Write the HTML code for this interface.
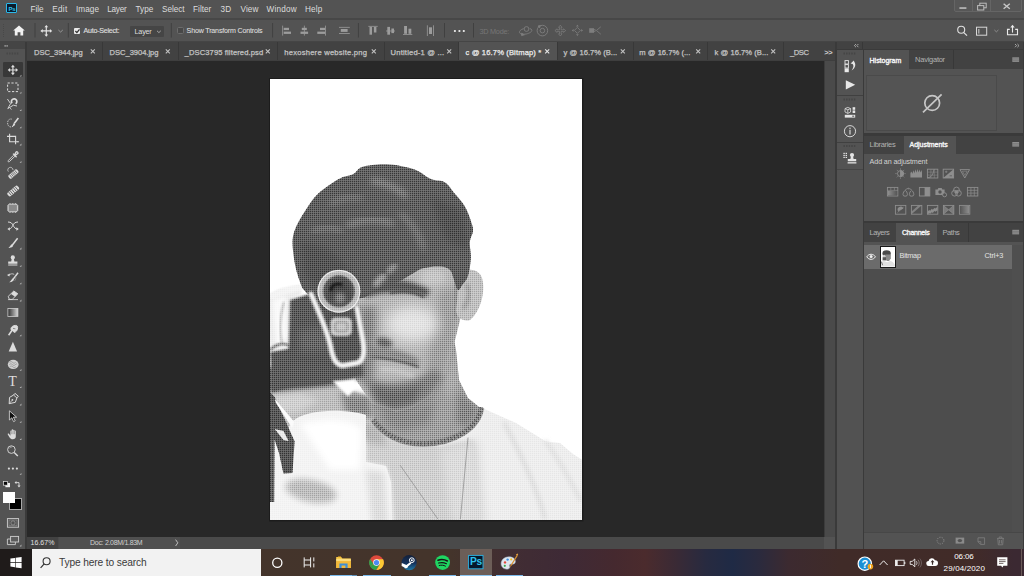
<!DOCTYPE html>
<html lang="en">
<head>
<meta charset="utf-8">
<title>c @ 16.7% (Bitmap)</title>
<style>
html,body{margin:0;padding:0;}
body{width:1024px;height:576px;overflow:hidden;background:#282828;position:relative;font-family:"Liberation Sans",sans-serif;color:#d8d8d8;}
.a{position:absolute;}
.t{position:absolute;white-space:nowrap;line-height:1;font-size:8px;color:#d6d6d6;}
svg{position:absolute;overflow:visible;}
.r{position:absolute;}
</style>
</head>
<body>
<!-- application frame -->
<div class="r" style="left:0;top:0;width:1024px;height:18px;background:#535353"></div>
<div class="r" style="left:0;top:17.700px;width:1024px;height:2.200px;background:#474747"></div>
<div class="r" style="left:0;top:19.900px;width:1024px;height:20.800px;background:#535353"></div>
<div class="r" style="left:0;top:40.700px;width:1024px;height:1.900px;background:#454545"></div>
<!-- document tab bar -->
<div class="r" style="left:26px;top:42px;width:810px;height:18px;background:#424242"></div>
<div class="r" style="left:458px;top:42px;width:99px;height:18px;background:#535353"></div>
<div class="r" style="left:102.0px;top:42px;width:1px;height:18px;background:#383838"></div><div class="r" style="left:177.5px;top:42px;width:1px;height:18px;background:#383838"></div><div class="r" style="left:277.0px;top:42px;width:1px;height:18px;background:#383838"></div><div class="r" style="left:383.5px;top:42px;width:1px;height:18px;background:#383838"></div><div class="r" style="left:458.0px;top:42px;width:1px;height:18px;background:#383838"></div><div class="r" style="left:556.8px;top:42px;width:1px;height:18px;background:#383838"></div><div class="r" style="left:632.5px;top:42px;width:1px;height:18px;background:#383838"></div><div class="r" style="left:706.8px;top:42px;width:1px;height:18px;background:#383838"></div><div class="r" style="left:783.0px;top:42px;width:1px;height:18px;background:#383838"></div><svg style="left:0;top:0" width="1024" height="70"><path d="M90.8 49.3L94.8 53.3M94.8 49.3L90.8 53.3" stroke="#c4c4c4" stroke-width="1.050" fill="none"/><path d="M165.8 49.3L169.8 53.3M169.8 49.3L165.8 53.3" stroke="#c4c4c4" stroke-width="1.050" fill="none"/><path d="M265.8 49.3L269.8 53.3M269.8 49.3L265.8 53.3" stroke="#c4c4c4" stroke-width="1.050" fill="none"/><path d="M371.8 49.3L375.8 53.3M375.8 49.3L371.8 53.3" stroke="#c4c4c4" stroke-width="1.050" fill="none"/><path d="M447.2 49.3L451.2 53.3M451.2 49.3L447.2 53.3" stroke="#c4c4c4" stroke-width="1.050" fill="none"/><path d="M545.2 49.3L549.2 53.3M549.2 49.3L545.2 53.3" stroke="#e8e8e8" stroke-width="1.050" fill="none"/><path d="M620.8 49.3L624.8 53.3M624.8 49.3L620.8 53.3" stroke="#c4c4c4" stroke-width="1.050" fill="none"/><path d="M696.2 49.3L700.2 53.3M700.2 49.3L696.2 53.3" stroke="#c4c4c4" stroke-width="1.050" fill="none"/><path d="M771.2 49.3L775.2 53.3M775.2 49.3L771.2 53.3" stroke="#c4c4c4" stroke-width="1.050" fill="none"/></svg>
<!-- canvas -->
<div class="r" style="left:27px;top:60px;width:808px;height:1px;background:#3e3e3e"></div>
<div class="r" style="left:27px;top:61px;width:797px;height:476px;background:#282828"></div>
<div class="r" style="left:824px;top:61px;width:11px;height:476px;background:#4a4a4a"></div>
<div class="r" style="left:824px;top:61px;width:1px;height:476px;background:#3c3c3c"></div>
<!-- status bar -->
<div class="r" style="left:27px;top:537px;width:808px;height:12px;background:#4a4a4a"></div>
<div class="r" style="left:27px;top:537px;width:31px;height:12px;background:#424242"></div>
<div class="r" style="left:59px;top:537px;width:121px;height:12px;background:#4f4f4f"></div>
<div class="r" style="left:824px;top:537px;width:11px;height:12px;background:#535353"></div>
<!-- tools panel -->
<div class="r" style="left:0;top:42px;width:25px;height:507px;background:#535353"></div>
<div class="r" style="left:25px;top:42px;width:2px;height:507px;background:#3a3a3a"></div>
<div class="r" style="left:0;top:42px;width:25px;height:7px;background:#454545"></div>
<div class="r" style="left:3px;top:62px;width:20px;height:15px;background:#383838;border-radius:1px"></div>
<!-- right dock -->
<div class="r" style="left:835px;top:42px;width:189px;height:507px;background:#3a3a3a"></div>
<div class="r" style="left:837px;top:42px;width:186px;height:7px;background:#424242"></div>
<div class="r" style="left:862px;top:42px;width:1px;height:7px;background:#383838"></div>
<svg style="left:0;top:0" width="1024" height="576" viewBox="0 0 1024 576">
<defs>
 <clipPath id="docclip"><rect x="270" y="79" width="312" height="441"/></clipPath>
 <filter id="b0" x="-20%" y="-20%" width="140%" height="140%"><feGaussianBlur stdDeviation="0.500"/></filter>
 <filter id="b1" x="-20%" y="-20%" width="140%" height="140%"><feGaussianBlur stdDeviation="0.900"/></filter>
 <filter id="b2" x="-30%" y="-30%" width="160%" height="160%"><feGaussianBlur stdDeviation="2"/></filter>
 <filter id="b3" x="-40%" y="-40%" width="180%" height="180%"><feGaussianBlur stdDeviation="3"/></filter>
 <filter id="b4" x="-40%" y="-40%" width="180%" height="180%"><feGaussianBlur stdDeviation="4.500"/></filter>
 <filter id="b7" x="-50%" y="-50%" width="200%" height="200%"><feGaussianBlur stdDeviation="7"/></filter>
 <pattern id="ht" x="270" y="79" width="2" height="2" patternUnits="userSpaceOnUse"><rect width="2" height="2" fill="#b8b8b8"/><rect x="0" y="0" width="1.300" height="1.300" fill="#303030"/></pattern>
 <clipPath id="hairclip"><path d="M292.6 240.0C292.2 245.1 293.2 252.5 293.9 257.8C294.6 263.1 295.5 267.3 296.7 271.7C297.9 276.1 299.6 281.1 300.8 284.2C302.0 287.2 302.1 287.9 304.0 290.0C305.9 292.1 307.7 295.2 312.0 297.0C316.3 298.8 321.7 300.8 330.0 301.0C338.3 301.2 355.0 299.5 362.0 298.0C369.0 296.5 368.3 294.0 372.0 292.0C375.7 290.0 379.7 287.7 384.0 286.0C388.3 284.3 393.3 284.0 398.0 282.0C402.7 280.0 407.7 276.3 412.0 274.0C416.3 271.7 419.3 269.2 424.0 268.0C428.7 266.8 435.7 266.2 440.0 266.5C444.3 266.8 447.7 267.8 450.0 270.0C452.3 272.2 452.7 276.7 454.0 280.0C455.3 283.3 456.5 289.3 458.0 290.0C459.5 290.7 461.3 286.3 463.0 284.0C464.7 281.7 466.7 280.3 468.0 276.0C469.3 271.7 470.5 264.0 470.8 258.3C471.1 252.6 469.4 246.2 469.8 241.7C470.2 237.1 472.8 234.5 473.0 231.0C473.2 227.5 472.2 225.0 470.8 220.8C469.4 216.6 467.4 210.7 464.6 206.0C461.8 201.3 457.3 196.6 454.0 192.7C450.7 188.8 448.6 184.6 444.8 182.3C441.0 180.0 436.2 181.2 431.0 179.0C425.8 176.8 421.2 171.7 413.8 169.2C406.4 166.7 395.2 164.6 386.7 164.2C378.2 163.8 368.3 165.1 362.7 166.7C357.1 168.3 357.3 171.9 353.3 174.0C349.3 176.1 344.7 175.7 338.8 179.0C332.9 182.3 323.6 188.6 318.0 193.8C312.4 199.0 309.1 204.9 305.4 210.4C301.7 215.9 298.1 222.1 296.0 227.0C293.9 231.9 293.0 234.9 292.6 240.0Z"/></clipPath>
 <clipPath id="headclip"><path d="M330 250L470 250L470 272L460 320L455 340L446 372L432 396L412 408L396 412L372 404L356 380L350 340Z"/><path d="M460 276C466 267 478 268 482 278C486 292 480 312 470 320C464 322 456 318 456 310Z"/><path d="M368 400L454 340L456 350L459 380L468 398L481.600 409C476 430 450 444 420 444C396 444 378 432 370 416Z"/><path d="M268 380L372 398L376 424L268 444Z"/></clipPath>
 <clipPath id="sleeveclip"><path d="M293 421C300 414 320 410 341 411C352 411.500 360 413 366 415L366 462L386 466L391 482L392 524L266 524L266 446L280 440Z"/></clipPath>
</defs>
<rect x="269" y="78" width="314.500" height="443.500" fill="#1c1c1c"/>
<g clip-path="url(#docclip)">
 <rect x="270" y="79" width="312" height="441" fill="#ffffff"/>
 <!-- shirt -->
 <path filter="url(#b0)" d="M372 420L480 407L516 423L546 441.500L560 443L573 454L584 461L584 524L266 524L266 470L296 414Z" fill="#eeeeee"/>
 <path filter="url(#b2)" d="M366 416L380 432L440 446L474 440L480 524L394 524L391 482L386 466L366 462Z" fill="#d0d0d0"/>
 <path filter="url(#b4)" d="M440 450L478 440L486 524L452 524Z" fill="#dcdcdc"/>
 <path filter="url(#b3)" d="M356 418L382 424L386 446L366 442Z" fill="#b8b8b8"/>
 <path filter="url(#b2)" d="M504 422.500C524 460 538 492 545 519" stroke="#d8d8d8" stroke-width="3" fill="none"/>
 <path filter="url(#b2)" d="M545 440.600C560 460 572 484 581 501" stroke="#dcdcdc" stroke-width="3" fill="none"/>
 <!-- neck -->
 <path filter="url(#b0)" d="M368 400L454 340L456 350L459 380L468 398L481.600 409C476 430 450 444 420 444C396 444 378 432 370 416Z" fill="#a0a0a0"/>
 <g clip-path="url(#headclip)">
 <path filter="url(#b3)" d="M458 392L470 401L478 410L468 428L456 422Z" fill="#888888"/>
 <path filter="url(#b4)" d="M380 408L420 408L436 398L430 424L402 432L384 424Z" fill="#8c8c8c"/>
 <path filter="url(#b3)" d="M440 372L456 352L458 384L448 400Z" fill="#acacac"/>
 </g>
 <!-- collar -->
 <path filter="url(#b0)" d="M481 407.500C478 428 454 443 424 443.500C400 444 382 433 373 419" fill="none" stroke="#929292" stroke-width="6.500"/>
 <path filter="url(#b0)" d="M481 407.500C478 428 454 443 424 443.500C400 444 382 433 373 419" fill="none" stroke="#6a6a6a" stroke-width="4" stroke-dasharray="1.600 1.800"/>
 <!-- hand / wrist -->
 <path filter="url(#b1)" d="M266 382L300 380L340 386L372 398L374 420L336 424L300 426L280 440L266 440Z" fill="#bebebe"/>
 <path filter="url(#b3)" d="M340 392L370 396L374 418L346 414Z" fill="#8c8c8c"/>
 <path filter="url(#b3)" d="M272 396L300 392L320 400L300 412L272 414Z" fill="#d0d0d0"/>
 <!-- sleeve -->
 <path filter="url(#b0)" d="M293 421C300 414 320 410 341 411C352 411.500 360 413 366 415L366 462L386 466L391 482L392 524L266 524L266 446L280 440Z" fill="#f4f4f4"/>
 <g clip-path="url(#sleeveclip)">
 <path filter="url(#b3)" d="M300 424C330 416 356 420 362 430L360 470L330 470Z" fill="#ffffff"/>
 <ellipse filter="url(#b3)" cx="311" cy="491" rx="26" ry="11" fill="#bebebe" transform="rotate(12 311 491)"/>
 <path filter="url(#b3)" d="M366 470L384 472L388 524L372 524Z" fill="#dedede"/>
 </g>
 <!-- fingers -->
 <path filter="url(#b1)" d="M266 296L280 289L300 285L302 294L290 300L289 346L270 352Z" fill="#ececec"/>
 <path filter="url(#b2)" d="M272 300L286 296L287 338L276 346Z" fill="#fafafa"/>
 <path filter="url(#b1)" d="M284 302C280 316 279 330 282 344" stroke="#a8a8a8" stroke-width="1.500" fill="none"/>
 <path filter="url(#b1)" d="M270 350C276 344 284 342 290 346" stroke="#6a6a6a" stroke-width="2" fill="none"/>
 <path filter="url(#b1)" d="M270 297C282 292 294 288 303 287.500" stroke="#f4f4f4" stroke-width="6" fill="none"/>
 <!-- strap -->
 <path filter="url(#b0)" d="M268 390L274.700 397L294.600 441.300L292.500 473L283.400 473.500L279 453L274.700 440L268 440Z" fill="#585858"/>
 <path filter="url(#b0)" d="M274.700 398.800L294 421.500L292.200 428L276 403Z" fill="#fbfbfb"/>
 <path filter="url(#b0)" d="M274.700 429L283.500 431L288.500 441L283.500 440Z" fill="#ececec"/>
 <path filter="url(#b0)" d="M268 440L274.600 440L274.200 502L268 502Z" fill="#5e5e5e"/>
 <path filter="url(#b1)" d="M270 352L292 348L300 384L272 392Z" fill="#5c5c5c"/>
 <!-- face -->
 <path filter="url(#b0)" d="M330 250L470 250L470 272L460 320L455 340L446 372L432 396L412 408L396 412L372 404L356 380L350 340Z" fill="#b6b6b6"/>
 <g clip-path="url(#headclip)">
 <path filter="url(#b4)" d="M440 290L460 286L456 340L446 372L432 396L426 370Z" fill="#a0a0a0"/>
 <ellipse filter="url(#b7)" cx="412" cy="324" rx="27" ry="18" fill="#e4e4e4"/>
 <ellipse filter="url(#b3)" cx="433" cy="277" rx="13" ry="8" fill="#c8c8c8"/>
 <ellipse filter="url(#b3)" cx="396" cy="286" rx="18" ry="6" fill="#8c8c8c"/>
 <path filter="url(#b2)" d="M455 274L456 318" stroke="#929292" stroke-width="6" fill="none"/>
 </g>
 <!-- ear -->
 <path filter="url(#b0)" d="M460 276C466 267 478 268 482 278C486 292 480 312 470 320C464 322 456 318 456 310Z" fill="#c0c0c0"/>
 <path filter="url(#b2)" d="M466 284C471 290 470 300 463 309" stroke="#8e8e8e" stroke-width="3" fill="none"/>
 <g clip-path="url(#headclip)">
 <!-- beard & mouth -->
 <path filter="url(#b3)" d="M362 376C380 386 410 386 434 370L444 376L430 398L412 408L396 412L374 404Z" fill="#828282"/>
 <path filter="url(#b3)" d="M372 384C386 392 404 392 422 384L414 402L392 407L378 400Z" fill="#6e6e6e"/>
 <path filter="url(#b2)" d="M364 350C378 344 402 349 420 360L417 366C400 359 382 357 368 360Z" fill="#8c8c8c"/>
 <path filter="url(#b1)" d="M366 357C382 357 402 361 419 367" stroke="#585858" stroke-width="2" fill="none"/>
 <path filter="url(#b2)" d="M380 369C392 369 404 372 414 376" stroke="#cacaca" stroke-width="4" fill="none"/>
 <!-- nose shadow -->
 <path filter="url(#b2)" d="M376 339C382 335 392 339 393 345C388 349 380 348 376 344Z" fill="#6c6c6c"/>
 <path filter="url(#b4)" d="M360 306L376 306L373 384L358 380Z" fill="#868686"/>
 <!-- eye / brow -->
 <path filter="url(#b1)" d="M390 293C400 290 414 291 424 297" stroke="#565656" stroke-width="2.600" fill="none"/>
 <path filter="url(#b2)" d="M362 286C380 277 410 279 430 290L427 297C410 290 386 290 366 298Z" fill="#5c5c5c"/>
 </g>
 <!-- hair -->
 <path filter="url(#b0)" d="M292.6 240.0C292.2 245.1 293.2 252.5 293.9 257.8C294.6 263.1 295.5 267.3 296.7 271.7C297.9 276.1 299.6 281.1 300.8 284.2C302.0 287.2 302.1 287.9 304.0 290.0C305.9 292.1 307.7 295.2 312.0 297.0C316.3 298.8 321.7 300.8 330.0 301.0C338.3 301.2 355.0 299.5 362.0 298.0C369.0 296.5 368.3 294.0 372.0 292.0C375.7 290.0 379.7 287.7 384.0 286.0C388.3 284.3 393.3 284.0 398.0 282.0C402.7 280.0 407.7 276.3 412.0 274.0C416.3 271.7 419.3 269.2 424.0 268.0C428.7 266.8 435.7 266.2 440.0 266.5C444.3 266.8 447.7 267.8 450.0 270.0C452.3 272.2 452.7 276.7 454.0 280.0C455.3 283.3 456.5 289.3 458.0 290.0C459.5 290.7 461.3 286.3 463.0 284.0C464.7 281.7 466.7 280.3 468.0 276.0C469.3 271.7 470.5 264.0 470.8 258.3C471.1 252.6 469.4 246.2 469.8 241.7C470.2 237.1 472.8 234.5 473.0 231.0C473.2 227.5 472.2 225.0 470.8 220.8C469.4 216.6 467.4 210.7 464.6 206.0C461.8 201.3 457.3 196.6 454.0 192.7C450.7 188.8 448.6 184.6 444.8 182.3C441.0 180.0 436.2 181.2 431.0 179.0C425.8 176.8 421.2 171.7 413.8 169.2C406.4 166.7 395.2 164.6 386.7 164.2C378.2 163.8 368.3 165.1 362.7 166.7C357.1 168.3 357.3 171.9 353.3 174.0C349.3 176.1 344.7 175.7 338.8 179.0C332.9 182.3 323.6 188.6 318.0 193.8C312.4 199.0 309.1 204.9 305.4 210.4C301.7 215.9 298.1 222.1 296.0 227.0C293.9 231.9 293.0 234.9 292.6 240.0Z" fill="#5e5e5e"/>
 <g clip-path="url(#hairclip)">
 <path filter="url(#b3)" d="M371 181C384 182 398 188 407 197" stroke="#8c8c8c" stroke-width="5" fill="none"/>
 <path filter="url(#b3)" d="M347 226C362 218 380 218 394 224" stroke="#868686" stroke-width="5" fill="none"/>
 <path filter="url(#b3)" d="M312 232C322 226 334 226 342 232" stroke="#808080" stroke-width="4" fill="none"/>
 <path filter="url(#b3)" d="M400 214C412 222 420 236 424 250" stroke="#828282" stroke-width="4" fill="none"/>
 <path filter="url(#b3)" d="M330 204C340 198 352 196 362 198" stroke="#7e7e7e" stroke-width="4" fill="none"/>
 <path filter="url(#b4)" d="M430 196L462 210L470 250L446 240Z" fill="#525252"/>
 <path filter="url(#b4)" d="M300 240L330 250L350 270L320 290L304 276Z" fill="#545454"/>
 <path filter="url(#b2)" d="M388 273C391 268 394 266 397 266" stroke="#9a9a9a" stroke-width="5" fill="none"/>
 <path filter="url(#b2)" d="M375 286C378 280 382 277 386 276" stroke="#a4a4a4" stroke-width="6" fill="none"/>
 </g>
 <!-- camera dark body -->
 <path filter="url(#b1)" d="M290 300L316 292L336 312L340 382L300 385L288 372Z" fill="#5a5a5a"/>
 <path filter="url(#b3)" d="M298 330L326 326L330 350L300 352Z" fill="#666666"/>
 <path filter="url(#b2)" d="M268 368L300 362L340 366L362 362L364 376L340 385L300 389L268 392Z" fill="#5c5c5c"/>
 <!-- camera silver -->
 <path filter="url(#b1)" d="M318 300L336 312L360 306L364 360L340 367L330 345Z" fill="#585858"/>
 <path filter="url(#b1)" d="M311 294C318 310 327 330 330.500 346C332.500 357 335 365 343 365.500L357 363C364 361 364.500 352 363 342L357 308" stroke="#f2f2f2" stroke-width="5" fill="none" stroke-linecap="round"/>
 <rect filter="url(#b1)" x="330.500" y="317.500" width="21.500" height="18.500" rx="5" fill="#cccccc"/>
 <rect filter="url(#b1)" x="334" y="321" width="14.500" height="11.500" rx="3.500" fill="#a4a4a4"/>
 <rect filter="url(#b1)" x="336" y="323" width="10.500" height="7.500" rx="2.500" fill="#c4c4c4"/>
 <!-- white gap -->
 <path filter="url(#b1)" d="M332.500 381L355 379.500L356 388L348 396.500Z" fill="#ffffff"/>
 <!-- lens -->
 <circle filter="url(#b0)" cx="338.900" cy="291.200" r="21.500" fill="#ececec"/>
 <circle filter="url(#b0)" cx="338.900" cy="291.200" r="20.300" fill="#c0c0c0"/>
 <circle filter="url(#b0)" cx="338.900" cy="291.200" r="17.300" fill="#dadada"/>
 <circle filter="url(#b1)" cx="338.900" cy="291.200" r="16.200" fill="#5a5a5a"/>
 <circle filter="url(#b2)" cx="338.900" cy="291.200" r="11" fill="#4c4c4c"/>
 <path filter="url(#b1)" d="M331 291C331 285 336 283 342 284.500" stroke="#1a1a1a" stroke-width="3.200" fill="none"/>
 <circle filter="url(#b2)" cx="340" cy="298" r="5.500" fill="#848484"/>
 <rect x="270" y="79" width="312" height="441" fill="url(#ht)" style="mix-blend-mode:overlay" opacity="0.700"/>
 <!-- necklace -->
 <path d="M468 437.600L460.400 519M400 465L437.800 519" stroke="#9a9a9a" stroke-width="0.900" fill="none"/>
</g>
</svg>

<!-- ps logo -->
<div class="r" style="left:6.4px;top:3px;width:10.8px;height:10.400px;background:#0b1c2c;border:0.9px solid #2ab8ea;box-sizing:border-box;border-radius:1px"></div>
<!-- layer dropdown -->
<div class="r" style="left:130px;top:25.900px;width:34px;height:11px;background:#454545;border-radius:1px"></div>
<!-- auto-select checkbox -->
<div class="r" style="left:74px;top:27.8px;width:6.4px;height:6.4px;background:#eaeaea;border-radius:1px"></div>
<div class="r" style="left:177.200px;top:27.200px;width:6.800px;height:6.800px;border:0.9px solid #6c6c6c;box-sizing:border-box;border-radius:1.600px;background:#484848"></div>
<!-- window control box -->
<div class="r" style="left:954px;top:-2px;width:67.5px;height:14.200px;background:#575757;border:0.8px solid #656565;box-sizing:border-box;border-radius:2px"></div>
<div class="r" style="left:972.3px;top:0;width:0.8px;height:12px;background:#656565"></div>
<div class="r" style="left:990.2px;top:0;width:0.8px;height:12px;background:#656565"></div>
<svg style="left:0;top:0" width="1024" height="44" viewBox="0 0 1024 44">
 <!-- grip -->
 <path d="M3.500 24v13" stroke="#484848" stroke-width="1" stroke-dasharray="1 1"/>
 <!-- separators -->
 <g stroke="#404040" stroke-width="1"><path d="M35 23v14.500M68.300 23v14.500M171.300 23v14.500M272.600 23v14.500M358.400 23v14.500M444.500 23v14.500M473.500 23v14.500"/></g>
 <!-- home -->
 <path d="M19 25.400l5.800 5.200h-1.600v5h-2.800v-3.400h-2.800v3.400h-2.800v-5h-1.600z" fill="#f2f2f2"/>
 <!-- move icon -->
 <path d="M46.300 25l1.900 2.300h-1.300v3h3v-1.300l2.300 1.900-2.300 1.900v-1.300h-3v3h1.300l-1.900 2.300-1.900-2.300h1.300v-3h-3v1.300l-2.300-1.900 2.300-1.900v1.300h3v-3h-1.300z" fill="#e4e4e4"/>
 <path d="M58.400 30l2.200 2 2.200-2" fill="none" stroke="#a8a8a8" stroke-width="0.800"/>
 <path d="M75.400 31l1.500 1.600 2.600-3.200" fill="none" stroke="#303030" stroke-width="1.300"/>
 <path d="M157 30.800l1.900 1.800 1.900-1.800" fill="none" stroke="#bcbcbc" stroke-width="0.800"/>
 <!-- align icons -->
 <g fill="#9c9c9c">
  <rect x="282.300" y="25.600" width="0.800" height="10"/><rect x="283.700" y="27.800" width="5.300" height="2.300"/><rect x="283.700" y="31.600" width="7.300" height="2.300"/>
  <rect x="303.900" y="25.600" width="0.800" height="10"/><rect x="301.800" y="27.800" width="5" height="2.300"/><rect x="300.500" y="31.600" width="7.600" height="2.300"/>
  <rect x="325.200" y="25.600" width="0.800" height="10"/><rect x="320" y="27.800" width="5" height="2.300"/><rect x="317.300" y="31.600" width="7.700" height="2.300"/>
  <rect x="339" y="26.900" width="10.800" height="0.800"/><rect x="339" y="33.200" width="10.800" height="0.800"/><rect x="340.800" y="29" width="6.800" height="2.900"/>
  <rect x="368.300" y="25.900" width="9.400" height="0.800"/><rect x="369.500" y="26.900" width="2.500" height="7.800"/><rect x="373.900" y="26.900" width="2.500" height="5.600"/>
  <rect x="386" y="30.600" width="9" height="0.800"/><rect x="387.300" y="26.900" width="2.700" height="7.800"/><rect x="391.400" y="28.500" width="2.600" height="4.600"/>
  <rect x="403" y="34" width="9.300" height="0.800"/><rect x="404.100" y="26" width="2.900" height="7.800"/><rect x="408.500" y="28.700" width="2.800" height="5.100"/>
  <rect x="426.900" y="25.300" width="0.800" height="10.700"/><rect x="433.100" y="25.300" width="0.800" height="10.700"/><rect x="429" y="27.300" width="3" height="6.700"/>
 </g>
 <g fill="#f0f0f0"><circle cx="454.900" cy="31" r="1.100"/><circle cx="459.400" cy="31" r="1.100"/><circle cx="463.800" cy="31" r="1.100"/></g>
 <!-- 3d mode icons -->
 <g fill="none" stroke="#7e7e7e" stroke-width="0.900">
  <circle cx="526.500" cy="29" r="2.400"/><path d="M523.600 28.600c-3 1-4.600 2.800-4 4.200 0.600 1.400 3.400 1.800 6.600 1.200 3.600-0.800 6-2.400 5.600-4-0.200-0.800-1-1.200-2-1.400"/><path d="M521.600 33.200l2.800 1.600-2.800 0.800z" fill="#7e7e7e"/>
  <circle cx="542.400" cy="30.600" r="5.300"/><circle cx="542.400" cy="30.600" r="2.300"/><path d="M538 26l2.400-0.400-0.800 2.200z" fill="#7e7e7e"/>
  <path d="M560.300 25.200l1.800 2.200h-1v2.400h2.400v-1l2.200 1.800-2.200 1.800v-1h-2.400v2.400h1l-1.800 2.200-1.800-2.200h1v-2.400h-2.400v1l-2.200-1.800 2.200-1.800v1h2.400v-2.400h-1z" stroke-width="0.700"/>
  <path d="M577.400 27.400l3 3-3 3-3-3z" stroke-width="0.800"/><path d="M577.400 24.800l1.400 1.800h-2.800zM577.400 36l1.400-1.800h-2.800zM571.800 30.400l1.800-1.400v2.800zM583 30.400l-1.800-1.400v2.800z" fill="#7e7e7e" stroke="none"/>
  <rect x="589.200" y="28.200" width="4.800" height="4.600" fill="#7e7e7e" stroke="none"/><path d="M594 29.600h1.200v1.800h-1.200M600.800 26.800l-4.400 3.700 4.400 3.700" stroke-width="0.800"/>
 </g>
 <!-- right side -->
 <circle cx="961.200" cy="29.800" r="3.500" fill="none" stroke="#e0e0e0" stroke-width="1.100"/><path d="M963.800 32.600l3.200 3" stroke="#e0e0e0" stroke-width="1.300"/>
 <rect x="976.500" y="27.200" width="10.200" height="8" fill="none" stroke="#d8d8d8" stroke-width="1"/><rect x="978.200" y="29" width="1.200" height="4.600" fill="#bdbdbd"/>
 <path d="M994.400 30l2 1.800 2-1.800" fill="none" stroke="#9a9a9a" stroke-width="0.800"/>
 <path d="M1009.800 29.400h-2.300v5.400h10v-5.400h-2.300" fill="none" stroke="#eaeaea" stroke-width="1.100"/><path d="M1012.500 32.600v-6" stroke="#eaeaea" stroke-width="1.100"/><path d="M1010.300 27.400l2.200-2.600 2.200 2.600z" fill="#eaeaea"/>
 <!-- window controls -->
 <rect x="959.400" y="7.300" width="7" height="1.500" fill="#c4c4c4"/>
 <rect x="979.800" y="3.200" width="6.400" height="4.600" fill="none" stroke="#bcbcbc" stroke-width="1"/><rect x="977.600" y="5.600" width="6.200" height="4.400" fill="#575757" stroke="#bcbcbc" stroke-width="1"/>
 <path d="M1003.600 3.800l6.200 5M1009.800 3.800l-6.200 5" stroke="#c8c8c8" stroke-width="1.400"/>
</svg>

<div class="r" style="left:9px;top:498.2px;width:12.5px;height:11.5px;background:#000;border:1px solid #a8a8a8;box-sizing:border-box"></div>
<div class="r" style="left:3px;top:492px;width:12.2px;height:11.3px;background:#fff"></div>
<svg style="left:0;top:0" width="40" height="576" viewBox="0 0 40 576">
<defs><linearGradient id="gtl" x1="0" x2="1"><stop offset="0" stop-color="#2e2e2e"/><stop offset="1" stop-color="#d8d8d8"/></linearGradient></defs>
<!-- panel header -->
<rect x="4.600" y="45.200" width="1" height="1.400" fill="#d0d0d0"/><rect x="6.600" y="45.200" width="1" height="1.400" fill="#d0d0d0"/>
<path d="M6.500 53.500h12.600" stroke="#474747" stroke-width="2" stroke-dasharray="1.400 1.200" fill="none"/>
<g fill="#dcdcdc" stroke="none">
 <!-- flyout triangles -->
 <path d="M21.400 74.800v1.800h-1.800zM21.400 91.800v1.800h-1.800zM21.400 109.200v1.800h-1.800zM21.400 126.400v1.800h-1.800zM21.400 143.600v1.800h-1.800zM21.400 161v1.800h-1.800zM21.400 247.600v1.800h-1.800zM21.400 265v1.800h-1.800zM21.400 282.400v1.800h-1.800zM21.400 299.600v1.800h-1.800zM21.400 334.400v1.800h-1.800zM21.400 369v1.800h-1.800zM21.400 386.200v1.800h-1.800zM21.400 403.600v1.800h-1.800zM21.400 421v1.800h-1.800zM21.400 438.200v1.800h-1.800zM21.400 473v1.800h-1.800zM21.400 544.600v1.800h-1.800z" fill="#bdbdbd"/>
 <!-- move -->
 <path d="M12.900 64.800l2 2.400h-1.400v2.200h2.200v-1.400l2.400 2-2.400 2v-1.400h-2.200v2.200h1.400l-2 2.400-2-2.400h1.400v-2.200h-2.200v1.400l-2.400-2 2.400-2v1.400h2.200v-2.200h-1.400z"/>
 <!-- sharpen triangle -->
 <path d="M12.900 341.800l4.200 9.800h-8.400z"/>
 <!-- dots -->
 <circle cx="8.900" cy="468.600" r="1.100"/><circle cx="12.900" cy="468.600" r="1.100"/><circle cx="16.900" cy="468.600" r="1.100"/>
</g>
<g fill="none" stroke="#dcdcdc" stroke-width="1">
 <!-- marquee -->
 <rect x="7.600" y="83" width="10.400" height="8.600" stroke-dasharray="2.200 1.600"/>
 <!-- lasso -->
 <path d="M7.400 99l3.200 4.600-2.800 5 5.600-3.400 3.600 0.800" stroke-width="0.900"/><path d="M12 103.200a2.700 2.700 0 1 1 3.600 0.600" stroke-width="1.700"/><path d="M10 107.800l1.400 1.800" stroke-width="0.800"/>
 <!-- quick select -->
 <path d="M11.800 119.200c-2-0.800-4 0.800-4.200 3.200-0.200 2.600 1.200 4.600 3.400 4.600 1.200 0 2-0.600 2.600-1.400" stroke-width="0.800" stroke-dasharray="1.400 0.800"/><path d="M18.400 118l-4.200 5.400" stroke-width="1.600"/><path d="M13.800 123l1.400 1.200c-0.400 1.400-1.600 2.400-3.200 2.200 0.800-0.800 1-2 1.800-3.400z" fill="#dcdcdc" stroke="none"/>
 <!-- crop -->
 <path d="M9.600 133.800v8h8.800M7 136.400h8.600v7.800" stroke-width="1.100"/><path d="M17.400 141.800h1.400" stroke-width="1.100"/>
 <!-- eyedropper -->
 <path d="M13.600 155.200l-5 5c-0.600 0.600-0.800 1.600 0 1.600 0.800 0 0.800-0.200 1.400-0.800l5-4.800" stroke-width="0.900"/><path d="M13 153.600l3.600 3.600M14.600 154.600l1.600-2.600c0.800-0.800 2.400 0.600 1.600 1.600l-2.400 1.600" stroke-width="1.300"/>
 <!-- spot healing -->
 <path d="M8.400 171.600a2.600 2.600 0 1 1 4.600-1.600" stroke-width="0.700"/>
 <g transform="rotate(-40 13.400 174)"><rect x="7.800" y="171.800" width="11.200" height="4.400" rx="1.400" fill="#dcdcdc" stroke="none"/><path d="M10 171.800v4.400M11.800 171.800v4.400M13.400 171.800v4.400M15 171.800v4.400M16.800 171.800v4.400" stroke="#535353" stroke-width="0.700"/></g>
 <!-- healing -->
 <g transform="rotate(-40 13.200 191)"><rect x="6.600" y="188.600" width="13.200" height="4.800" rx="1.600" fill="#dcdcdc" stroke="none"/><path d="M9 188.600v4.800M11 188.600v4.800M13.200 188.600v4.800M15.400 188.600v4.800M17.400 188.600v4.800" stroke="#535353" stroke-width="0.800"/></g>
 <!-- patch -->
 <rect x="8.200" y="204.200" width="9.200" height="7.600" rx="1.400" fill="#8a8a8a" stroke-width="0.900"/><path d="M10 203v1.200M12.800 203v1.200M15.600 203v1.200M10 211.800v1.200M12.800 211.800v1.200M15.600 211.800v1.200M7 206h1.200M7 208h1.200M7 210h1.200M17.400 206h1.200M17.400 208h1.200M17.400 210h1.200" stroke-width="0.700"/>
 <!-- content aware move -->
 <path d="M8 222c3 0 4.400 1.600 5.200 3.400s2 3.600 4.400 3.600M18 222c-3 0-4.400 1.600-5.200 3.400s-1.600 3.200-3.600 3.600" stroke-width="1"/><path d="M16.400 227.200l2.400 1.800-2.400 1.800zM9.800 227.200l-2.400 1.800 2.400 1.800z" fill="#dcdcdc" stroke="none"/>
 <!-- brush -->
 <path d="M17.600 238.200l-5.400 7" stroke-width="1.500"/><path d="M11.600 244.200l1.600 1.400c-0.400 1.600-2.400 2.600-5 2.200 1.600-0.800 2-2.200 3.400-3.600z" fill="#dcdcdc" stroke="none"/>
 <!-- stamp -->
 <circle cx="12.800" cy="257.400" r="2.100" fill="#dcdcdc" stroke="none"/><path d="M11.800 258.600h2l0.600 2.800h3v2.400h-9.200v-2.400h3z" fill="#dcdcdc" stroke="none"/><path d="M8.200 265h9.200" stroke-width="1"/>
 <!-- history brush -->
 <path d="M18 272.800l-5 6.600" stroke-width="1.500"/><path d="M12.600 278.400l1.400 1.200c-0.400 1.600-2.200 2.800-4.800 2.600 1.600-1 2-2.400 3.400-3.800z" fill="#dcdcdc" stroke="none"/><path d="M8.600 275.400c1.600-1.800 4-2 5.600-1" stroke-width="0.800"/><path d="M7 275l3-1.600-0.600 3z" fill="#dcdcdc" stroke="none"/><path d="M15.400 276.400c0.800 1.600 0.400 3.400-0.800 4.400" stroke-width="0.600" stroke="#9a9a9a"/>
 <!-- eraser -->
 <path d="M8.200 296.400l5.600-5.400 4 2.800-5.600 5.600h-2.800z" stroke-width="0.900"/><path d="M11 294l4 2.800 2.800-3-4-2.800z" fill="#dcdcdc" stroke="none"/><path d="M8 299.600h10" stroke-width="0.800"/>
 <!-- gradient -->
 <rect x="7.900" y="308.400" width="10" height="8" fill="url(#gtl)" stroke="#cfcfcf" stroke-width="0.800"/>
 <!-- smudge -->
 <path d="M10.800 329.400c0.200-2.600 2.200-4 5-4 1.400 0 1.800 0.800 1.800 2.200 0 2.600-1.400 4.600-3.600 4.800" stroke-width="1" fill="#dcdcdc"/><path d="M13.600 328l-5 7.200" stroke-width="1.500"/><path d="M13 328.400l2.400 0.400" stroke="#535353" stroke-width="0.600"/>
 <!-- sponge -->
 <ellipse cx="13.200" cy="364.400" rx="5.400" ry="4.600" fill="#cfcfcf" stroke="none"/><path d="M9.600 362.400c1-1 2-1 3 0s2 1 3 0M9.400 364.600c1-1 2-1 3 0s2 1 3 0 1.400-0.600 1.800-0.200M9.800 366.800c1-1 2-1 3 0s2 1 3 0" stroke="#707070" stroke-width="0.500"/>
 <!-- pen -->
 <g transform="rotate(40 12.800 399.400)"><path d="M10.600 393.400h4.400v2.200l1.600 4.400-3.800 5-3.800-5 1.600-4.400z" stroke-width="0.900"/><path d="M12.800 405v-4.400" stroke-width="0.700"/><circle cx="12.800" cy="400" r="0.900" fill="#dcdcdc" stroke="none"/><path d="M10.600 395.600h4.400" stroke-width="0.800"/></g>
 <!-- path select arrow -->
 <path d="M9.400 410.800v9.200l2.400-2.200 1.800 3.800 1.600-0.800-1.800-3.600h3.200z" fill="#101010" stroke="#e0e0e0" stroke-width="0.800"/>
 <!-- hand -->
 <path d="M10.400 435.800v-4.600c0-0.900 1.300-0.900 1.300 0v-1.400c0-0.900 1.400-0.900 1.400 0v0.600c0-0.900 1.400-0.900 1.400 0v0.800c0-0.800 1.300-0.800 1.300 0v5.200c0 1.800-1.200 2.800-3 2.800-1.600 0-2.400-0.600-3.200-1.800l-1.800-3c-0.400-0.800 0.600-1.400 1.200-0.600z" fill="#dcdcdc" stroke="none"/>
 <path d="M11.700 431.200v3M13.100 430.400v3.800M14.500 431v3.200" stroke="#535353" stroke-width="0.400"/>
 <!-- zoom -->
 <circle cx="11.400" cy="449.600" r="3.800" stroke-width="0.900"/><path d="M14.200 452.400l3.600 3.600" stroke-width="1.400"/><path d="M9.400 448.400a2.400 2.400 0 0 1 2.600-1.400" stroke-width="0.500"/>
 <!-- default colours -->
 <rect x="5.400" y="483" width="4.600" height="4.200" fill="#f0f0f0" stroke="none"/><rect x="3.400" y="481.400" width="4.200" height="3.800" fill="#0a0a0a" stroke="#e8e8e8" stroke-width="0.700"/>
 <!-- swap -->
 <path d="M16 482.600h3v3.400" stroke-width="0.900"/><path d="M16.400 481l-1.800 1.600 1.800 1.600zM17.400 485.600l1.600 1.900 1.600-1.900z" fill="#dcdcdc" stroke="none"/>
 <!-- quick mask -->
 <rect x="7.400" y="518.600" width="11.200" height="8.600" stroke-width="0.900" stroke="#cfcfcf"/><rect x="9" y="520" width="8" height="5.800" stroke-width="0.500" stroke="#9a9a9a"/><circle cx="13" cy="522.900" r="2.100" stroke-width="0.600" stroke="#a8a8a8"/>
 <!-- screen mode -->
 <rect x="10.600" y="536.400" width="8" height="5.600" stroke-width="0.900" fill="#5c5c5c" stroke="#cfcfcf"/><path d="M10.600 539h-3.200v5.600h8v-2.600" stroke-width="0.900" stroke="#cfcfcf"/>
</g>
</svg>

<!-- icon column -->
<div class="r" style="left:837px;top:50px;width:25.5px;height:499px;background:#525252"></div>
<div class="r" style="left:837px;top:50px;width:25.5px;height:45px;background:#535353"></div>
<div class="r" style="left:837px;top:96px;width:25.5px;height:46px;background:#535353"></div>
<div class="r" style="left:837px;top:143px;width:25.5px;height:26px;background:#535353"></div>
<div class="r" style="left:837px;top:95px;width:25.5px;height:1px;background:#404040"></div>
<div class="r" style="left:837px;top:142px;width:25.5px;height:1px;background:#404040"></div>
<div class="r" style="left:837px;top:169px;width:25.5px;height:1px;background:#454545"></div>
<!-- histogram panel -->
<div class="r" style="left:864px;top:50px;width:159px;height:18.5px;background:#424242"></div>
<div class="r" style="left:864px;top:50px;width:45px;height:19px;background:#535353"></div>
<div class="r" style="left:953px;top:50px;width:1px;height:18.5px;background:#383838"></div>
<div class="r" style="left:864px;top:68.5px;width:159px;height:64.5px;background:#535353"></div>
<div class="r" style="left:866px;top:74.5px;width:131px;height:56px;border:1px solid #4a4a4a;box-sizing:border-box;background:#545454"></div>
<!-- adjustments panel -->
<div class="r" style="left:864px;top:135.5px;width:159px;height:18px;background:#424242"></div>
<div class="r" style="left:903.5px;top:135.5px;width:52px;height:18.5px;background:#535353"></div>
<div class="r" style="left:864px;top:153.5px;width:159px;height:67px;background:#535353"></div>
<!-- channels panel -->
<div class="r" style="left:864px;top:223px;width:159px;height:19px;background:#424242"></div>
<div class="r" style="left:896px;top:223px;width:41px;height:19.5px;background:#535353"></div>
<div class="r" style="left:967.5px;top:223px;width:1px;height:19px;background:#383838"></div>
<div class="r" style="left:864px;top:242px;width:159px;height:290.5px;background:#4d4d4d"></div>
<div class="r" style="left:864px;top:242px;width:159px;height:3px;background:#535353"></div>
<div class="r" style="left:1012px;top:245px;width:11px;height:287.5px;background:#4f4f4f"></div>
<div class="r" style="left:864px;top:245px;width:148px;height:23.8px;background:#6b6b6b"></div>
<div class="r" style="left:864px;top:532.5px;width:159px;height:16.5px;background:#535353"></div>
<div class="r" style="left:864px;top:532px;width:159px;height:1px;background:#474747"></div>
<!-- channel thumbnail -->
<div class="r" style="left:880px;top:246px;width:16px;height:21.5px;background:#fff;border:1px solid #1a1a1a;box-sizing:border-box"></div>
<svg style="left:0;top:0" width="1024" height="576" viewBox="0 0 1024 576">
 <path d="M175.600 539.600l2.200 3.200-2.200 3.200" stroke="#c8c8c8" stroke-width="0.900" fill="none"/>
 <!-- collapse arrows -->
 <path d="M856 44l-1.6 1.6 1.6 1.6M858.4 44l-1.6 1.6 1.6 1.6" stroke="#bdbdbd" stroke-width="0.8" fill="none"/>
 <path d="M1015 44l1.6 1.6-1.6 1.6M1017.4 44l1.6 1.6-1.6 1.6" stroke="#bdbdbd" stroke-width="0.8" fill="none"/>
 <!-- grips -->
 <g stroke="#454545" stroke-width="2" stroke-dasharray="1.400 1.200" fill="none"><path d="M843.500 53.500h12.600M843.500 99.500h12.600M843.500 146h12.600"/></g>
 <!-- panel menus -->
 <g fill="#8f8f8f"><rect x="1012.3" y="57.3" width="6.8" height="4.6"/><rect x="1012.3" y="142" width="6.8" height="4.6"/><rect x="1012.3" y="229.8" width="6.8" height="4.6"/></g>
 <g stroke="#6a6a6a" stroke-width="0.5"><path d="M1012.3 58.9h6.8M1012.3 60.4h6.8M1012.3 143.6h6.8M1012.3 145.1h6.8M1012.3 231.4h6.8M1012.3 232.9h6.8"/></g>
 <!-- null histogram symbol -->
 <circle cx="932.2" cy="103" r="7.400" fill="none" stroke="#c6c6c6" stroke-width="1.700"/>
 <path d="M941.6 94.3L923 112.400" stroke="#c6c6c6" stroke-width="1.700"/>
 <!-- history icon -->
 <g fill="none" stroke="#e4e4e4" stroke-width="0.9"><rect x="845" y="60.6" width="3.4" height="3.4"/><rect x="845" y="64.6" width="3.4" height="3.4"/></g>
 <rect x="844.6" y="68.4" width="4.2" height="3.8" fill="#eaeaea"/>
 <path d="M850.6 63.6l3.2-3.2 0.6 1.6c1.6 2.4 1.2 6-2.8 8.4 2-2.6 2.4-5 1-6.4z" fill="#e6e6e6"/>
 <!-- play icon -->
 <path d="M845.8 80.2l9.4 4.6-9.4 4.6z" fill="#e8e8e8"/>
 <!-- 3D icon -->
 <g fill="none" stroke="#e0e0e0" stroke-width="0.8"><path d="M847.8 107.4l2.8 1.2v3.4l-2.8 1.4-2.8-1.4v-3.4zM845 108.6l2.8 1.2 2.8-1.2M847.8 109.8v3.6"/></g>
 <rect x="852.6" y="107.2" width="2.6" height="2.6" fill="#e6e6e6"/><rect x="852.6" y="110.4" width="2.6" height="2.6" fill="#e6e6e6"/>
 <rect x="844.8" y="114.8" width="10.4" height="2.8" fill="#e6e6e6"/><rect x="852.2" y="115.6" width="2" height="1.2" fill="#666"/>
 <!-- info icon -->
 <circle cx="850" cy="131.2" r="5.6" fill="none" stroke="#e4e4e4" stroke-width="0.9"/>
 <path d="M850 129.8v4.6" stroke="#e4e4e4" stroke-width="1.1"/><circle cx="850" cy="128.2" r="0.7" fill="#e4e4e4"/>
 <!-- clone source icon -->
 <g fill="#e4e4e4"><rect x="843.4" y="152.8" width="1.4" height="1.2"/><rect x="845.6" y="152.8" width="1.4" height="1.2"/><rect x="843.4" y="154.8" width="1.4" height="1.2"/><rect x="845.6" y="154.8" width="1.4" height="1.2"/><rect x="843.4" y="156.8" width="1.4" height="1.2"/><rect x="845.6" y="156.8" width="1.4" height="1.2"/>
 <circle cx="852" cy="155" r="2.1"/><path d="M851 156h2l0.6 3h2.6v2.2h-8.4v-2.2h2.6z"/><rect x="847.6" y="162.2" width="8.8" height="1.3"/></g>
 <!-- eye -->
 <path d="M866.8 256.8c2-3.4 6.6-3.4 8.6 0-2 3.4-6.6 3.4-8.6 0z" fill="none" stroke="#f0f0f0" stroke-width="1"/><circle cx="871.1" cy="256.6" r="1.5" fill="#f0f0f0"/>
 <!-- thumbnail figure -->
 <g><ellipse cx="886.600" cy="253.400" rx="4.200" ry="3.200" fill="#4a4a4a"/><path d="M885.400 254.600h5.400v3.800l-1.800 2.600h-2.200l-1.400-2z" fill="#8a8a8a"/><circle cx="884.200" cy="256.200" r="1.400" fill="#c8c8c8"/><rect x="882.600" y="257.200" width="3.400" height="3.200" fill="#555"/><path d="M881.200 266.600v-4.600l2.400-1.200 3.600 1.400 3.200-1.400 2.600 1.400 1.800 2.400v2z" fill="#e2e2e2"/><path d="M881.400 261.600l1.200 3.600" stroke="#555" stroke-width="0.800"/></g>
 <!-- panel footer icons -->
 <circle cx="940.5" cy="540.6" r="3.4" fill="none" stroke="#8a8a8a" stroke-width="0.9" stroke-dasharray="1.3 1.1"/>
 <rect x="955.6" y="537.6" width="8.6" height="6" fill="#8a8a8a"/><ellipse cx="959.9" cy="540.6" rx="2.2" ry="1.7" fill="#535353"/>
 <path d="M978 537.8h6.6v6.6h-4l-2.6-2.6z" fill="none" stroke="#7c7c7c" stroke-width="0.9"/><path d="M978 541.6h2.8v2.8" fill="none" stroke="#7c7c7c" stroke-width="0.8"/>
 <g fill="none" stroke="#7c7c7c" stroke-width="0.9"><path d="M997 538.4h7M999.2 538.2v-1.2h2.6v1.2M997.8 538.6l0.5 6.2h4.4l0.5-6.2M999.6 540v3.6M1001.4 540v3.6"/></g>
</svg>

<svg style="left:0;top:0" width="1024" height="576" viewBox="0 0 1024 576">
<g fill="none" stroke="#8e8e8e" stroke-width="0.9">
 <!-- row1 -->
 <circle cx="900.5" cy="173.6" r="3"/><path d="M900.5 170.6a3 3 0 0 1 0 6z" fill="#8e8e8e"/>
 <path d="M900.5 168.4v1.4M900.5 177.4v1.4M895.3 173.6h1.4M904.3 173.6h1.4M896.8 169.9l1 1M903.2 176.3l1 1M904.2 169.9l-1 1M897.8 176.3l-1 1" stroke-width="0.7"/>
 <path d="M910.4 177.6v-4.6l1-1.6 1 2.4 1-3.6 1 3 1-4 1 3.6 1-3.8 1 3.4 1-2.8 1 3 1-2.6 0.6 2.2v5.4z" fill="#8e8e8e" stroke="none"/>
 <rect x="927.4" y="169.2" width="10.4" height="8.8"/><path d="M930.9 169.2v8.8M934.3 169.2v8.8M927.4 172.1h10.4M927.4 175.1h10.4" stroke-width="0.5"/><path d="M927.6 177.8c4-0.6 5.4-3 6.4-8.4" stroke-width="0.9"/>
 <rect x="943.2" y="169.2" width="10.4" height="8.8"/><path d="M943.2 178l10.4-8.8v8.8z" fill="#8e8e8e" stroke="none"/><path d="M945 171.8h2.4M946.2 170.6v2.4" stroke-width="0.7"/><path d="M949.6 175.8h2.4" stroke="#535353" stroke-width="0.7"/>
 <path d="M960 169.6h9.6l-4.8 8.4z"/><path d="M962.4 171.2h4.8l-2.4 4.2z" stroke-width="0.6"/>
 <!-- row2 -->
 <rect x="887.4" y="187.4" width="10.4" height="8.6"/><path d="M887.4 190.4h10.4M890.8 187.4v3M894.4 187.4v3" stroke-width="0.6"/><rect x="888" y="191" width="9.2" height="4.4" fill="url(#gadj)" stroke="none"/>
 <path d="M908.4 188.2v1.2M905.4 189.6l3-1.4 3 1.4" stroke-width="0.8"/><path d="M903 194.6c0-2 1-3.4 2.2-4.4 1.2 1 2.2 2.4 2.2 4.4a2.2 1.6 0 0 1-4.4 0zM909.4 194.6c0-2 1-3.4 2.2-4.4 1.2 1 2.2 2.4 2.2 4.4a2.2 1.6 0 0 1-4.4 0z"/>
 <rect x="919.4" y="187.4" width="10.4" height="8.6"/><rect x="924.6" y="187.4" width="5.2" height="8.6" fill="#8e8e8e" stroke="none"/>
 <path d="M935.4 189.4h2.2l0.8-1.4h3.2l0.8 1.4h2.2v5.6h-9.2z" fill="#8e8e8e" stroke="none"/><circle cx="940" cy="192" r="1.7" fill="#535353" stroke="none"/><circle cx="944.6" cy="194.8" r="2" fill="#535353"/>
 <circle cx="956.5" cy="190" r="2.9"/><circle cx="954.6" cy="193.2" r="2.9"/><circle cx="958.4" cy="193.2" r="2.9"/><circle cx="956.5" cy="192" r="1.6" fill="#8e8e8e" stroke="none"/>
 <rect x="967.4" y="187.4" width="10.4" height="8.6"/><path d="M970.9 187.4v8.6M974.3 187.4v8.6M967.4 190.3h10.4M967.4 193.1h10.4" stroke-width="0.7"/>
 <!-- row3 -->
 <rect x="895.4" y="205.4" width="10.4" height="8.8"/><path d="M897.6 212.4l6-5.2" stroke-width="0.7"/><path d="M898 211.2a3 3 0 0 1 5.4-2.8z" fill="#8e8e8e" stroke="none"/>
 <rect x="911.4" y="205.4" width="10.4" height="8.8"/><path d="M911.6 211.4l6.6-5.8h3.4l-9.8 8.4z" fill="#8e8e8e" stroke="none" opacity="0.8"/>
 <rect x="927.4" y="205.4" width="10.4" height="8.8"/><path d="M927.6 211.6l1.6-1.6 1 0.8 1.6-2 1 1 1.6-1.8 1 0.6 2.2-1.8v3.4l-2.2 1.6-1-0.8-1.6 2-1-0.8-1.6 1.6-1-0.6-1.6 1.4z" fill="#8e8e8e" stroke="none"/>
 <rect x="943.4" y="205.4" width="10.4" height="8.8"/><path d="M943.4 205.4l5.2 4.4 5.2-4.4M943.4 214.2l5.2-4.4 5.2 4.4" stroke-width="0.7"/><path d="M943.4 205.4l5.2 4.4-5.2 4.4zM953.8 205.4l-5.2 4.4 5.2 4.4z" fill="#8e8e8e" stroke="none" opacity="0.7"/>
 <rect x="959.4" y="205.4" width="10.4" height="8.8"/><rect x="960" y="206" width="9.2" height="7.6" fill="url(#gadj2)" stroke="none"/>
</g>
<defs><linearGradient id="gadj" x1="0" x2="1"><stop offset="0" stop-color="#8e8e8e"/><stop offset="1" stop-color="#555"/></linearGradient>
<linearGradient id="gadj2" x1="0" x2="1"><stop offset="0" stop-color="#555"/><stop offset="1" stop-color="#8e8e8e"/></linearGradient></defs>
</svg>

<div class="r" style="left:0;top:549px;width:1024px;height:27px;background:linear-gradient(90deg,#43342b 0%,#44342b 44%,#412d33 50%,#3e2a36 55%,#45292f 60%,#4b2b2d 63%,#3a2a35 66%,#272a40 69%,#1f2a45 71.5%,#2a2a3e 74%,#3c2a30 77%,#402b28 82%,#412b28 95%,#3b2932 99%)"></div>
<div class="r" style="left:0;top:549px;width:32px;height:27px;background:#1f1b1a"></div>
<div class="r" style="left:32px;top:549px;width:229px;height:27px;background:#f2f2f2"></div>
<div class="r" style="left:460px;top:549px;width:32px;height:27px;background:#6c5e58"></div>
<!-- running indicators -->
<div class="r" style="left:330px;top:574.6px;width:22px;height:1.4px;background:#7cbcee"></div>
<div class="r" style="left:352px;top:574.6px;width:5px;height:1.4px;background:#5f8fb6"></div>
<div class="r" style="left:363px;top:574.6px;width:27.5px;height:1.4px;background:#7cbcee"></div>
<div class="r" style="left:429px;top:574.6px;width:27px;height:1.4px;background:#7cbcee"></div>
<div class="r" style="left:460px;top:574.6px;width:32px;height:1.4px;background:#8cc6f2"></div>
<div class="r" style="left:495.5px;top:574.6px;width:27px;height:1.4px;background:#7cbcee"></div>
<div class="r" style="left:1021px;top:549px;width:1px;height:27px;background:#6a5a58"></div>
<svg style="left:0;top:0" width="1024" height="576" viewBox="0 0 1024 576">
 <!-- windows logo -->
 <g fill="#ffffff"><path d="M10.4 558.6l4.6-0.7v4.4h-4.6zM15.6 557.8l6-0.9v5.4h-6zM10.4 562.9h4.6v4.4l-4.6-0.7zM15.6 562.9h6v5.4l-6-0.9z"/></g>
 <!-- search magnifier -->
 <circle cx="46.6" cy="561.2" r="3.5" fill="none" stroke="#333" stroke-width="1.1"/><path d="M44.2 563.9l-3.6 4" stroke="#333" stroke-width="1.2"/>
 <!-- cortana -->
 <circle cx="277.3" cy="562.8" r="4.6" fill="none" stroke="#fff" stroke-width="1.3"/>
 <!-- task view -->
 <g fill="none" stroke="#f0f0f0" stroke-width="1"><path d="M304.2 557.4v10M310.6 557.4v10M304.2 560h6.4M304.2 565h6.4M313.8 557.4v4M313.8 563.4v4"/></g>
 <!-- file explorer -->
 <path d="M336.2 557h5l1.2 1.4h8.4v9.6h-14.6z" fill="#f6c644"/><path d="M336.2 558.8h14.6v2.4h-14.6z" fill="#fbdc7c"/><path d="M336.2 561.2h14.6v6.8h-14.6z" fill="#f3b93a"/>
 <path d="M339.4 568v-4.6h8.2v4.6h-2.2v-2.6h-3.8v2.6z" fill="#3f8fd6"/><rect x="338" y="556.4" width="3" height="0.8" fill="#e0a020"/>
 <!-- chrome -->
 <circle cx="376.5" cy="562.6" r="7.3" fill="#de4a3c"/>
 <path d="M376.5 562.6l-6.4 3.6a7.3 7.3 0 0 0 6 3.7l3.6-5.6z" fill="#2da14c"/><path d="M370.1 559a7.3 7.3 0 0 0 0 7.2l3.4-2.2z" fill="#2da14c"/>
 <path d="M376.5 562.6l3.4 1.8-3.4 5.5a7.3 7.3 0 0 0 6.6-10.6h-6.6z" fill="#fcc934"/>
 <circle cx="376.5" cy="562.6" r="3.3" fill="#f4f4f4"/><circle cx="376.5" cy="562.6" r="2.6" fill="#4a8af4"/>
 <!-- steam -->
 <defs><linearGradient id="gst" x1="0" y1="0" x2="0" y2="1"><stop offset="0" stop-color="#13203a"/><stop offset="0.55" stop-color="#16335c"/><stop offset="1" stop-color="#1e7aa8"/></linearGradient></defs>
 <circle cx="409.2" cy="562.6" r="7.6" fill="url(#gst)"/>
 <circle cx="411.8" cy="560.2" r="2.4" fill="none" stroke="#fff" stroke-width="1"/><circle cx="411.8" cy="560.2" r="1" fill="#fff"/>
 <path d="M401.8 563l4.6 2 3.6-2.8 1.4 1.2-3.4 3.2a2 2 0 0 1-3.8 0.6l-2.6-1.2z" fill="#fff"/>
 <!-- spotify -->
 <circle cx="442.6" cy="562.6" r="7.4" fill="#1fd662"/>
 <g fill="none" stroke="#151515" stroke-linecap="round"><path d="M438 560.2c3.2-1 6.6-0.7 9.4 0.8" stroke-width="1.5"/><path d="M438.6 563c2.8-0.8 5.6-0.5 7.8 0.7" stroke-width="1.2"/><path d="M439.2 565.5c2.2-0.6 4.4-0.4 6.2 0.6" stroke-width="1"/></g>
 <!-- photoshop -->
 <rect x="468.6" y="555.4" width="14.4" height="13.4" fill="#06172b" stroke="#28b4e6" stroke-width="0.9"/>
 <!-- paint -->
 <path d="M501.4 565.6c-1.4-4.4 2.2-8.8 7.4-8.8 4 0 6.8 2.2 6.6 5-0.2 2.4-2.6 2.6-4 2.4-1.6-0.2-2.4 0.8-1.8 2 0.8 1.6-0.6 3-2.6 3-2.6 0-4.8-1.4-5.6-3.600z" fill="#dfe6ee" stroke="#9fb2c6" stroke-width="0.5"/>
 <circle cx="505" cy="562.4" r="1.2" fill="#e2483c"/><circle cx="507.6" cy="559.6" r="1.2" fill="#3f8fe0"/><circle cx="511.2" cy="559.4" r="1.1" fill="#f0c030"/><circle cx="504.8" cy="565.8" r="1.1" fill="#38a84c"/>
 <path d="M516.6 555.2l-6 9.800-1 2.200 1.900-1.500 6.100-9.800z" fill="#d89030"/><path d="M515.800 554.800l1.600-1.200 0.800 0.600-0.800 1.800z" fill="#e6a040"/>
 <!-- help icon -->
 <circle cx="864.8" cy="563.7" r="6.7" fill="#1a8fd4" stroke="#fff" stroke-width="1.2"/>
 <circle cx="870.4" cy="566.6" r="2.8" fill="#f2a51e"/><rect x="870" y="564.800" width="0.9" height="3.400" fill="#fff"/>
 <!-- chevron -->
 <path d="M879.600 565l4-4.200 4 4.200" fill="none" stroke="#f0f0f0" stroke-width="1"/>
 <!-- battery -->
 <rect x="895.500" y="560.200" width="8.600" height="5.400" fill="none" stroke="#f0f0f0" stroke-width="0.900"/><rect x="895.500" y="560.200" width="2.200" height="5.400" fill="#f0f0f0"/><rect x="904.300" y="561.800" width="1" height="2.200" fill="#f0f0f0"/>
 <!-- speaker -->
 <path d="M910.200 561.400h2l2.600-2.400v7.800l-2.600-2.400h-2z" fill="none" stroke="#f0f0f0" stroke-width="0.900"/>
 <path d="M916.400 561.200c0.800 1 0.800 2.600 0 3.600" fill="none" stroke="#e0e0e0" stroke-width="0.800"/><path d="M918 559.800c1.600 1.800 1.600 4.600 0 6.400" fill="none" stroke="#9a9090" stroke-width="0.800"/><path d="M919.800 558.600c2.200 2.400 2.200 6.400 0 8.800" fill="none" stroke="#7a6c6c" stroke-width="0.800"/>
 <!-- cloud -->
 <path d="M929 566a2.500 2.500 0 0 1-0.400-5 3.400 3.400 0 0 1 6.400-0.800 2.900 2.900 0 0 1 0.200 5.800z" fill="#fff"/><path d="M931.900 564.800v-2.600h-1.300l1.900-2.100 1.900 2.100h-1.300v2.600z" fill="#3a2a28"/>
 <!-- notifications -->
 <path d="M997.200 557.200h10.200v8.600h-4l-1.100 1.600-1.100-1.600h-4z" fill="#fff"/><path d="M999 559.800h6.600M999 561.600h6.600M999 563.400h4.400" stroke="#3a2a2a" stroke-width="0.700"/>
</svg>

<span class="t" style="left:30.5px;top:5.7px;font-size:8.2px;font-weight:normal;color:#dcdcdc;letter-spacing:-0.05px;">File</span>
<span class="t" style="left:52.3px;top:5.7px;font-size:8.2px;font-weight:normal;color:#dcdcdc;letter-spacing:0.25px;">Edit</span>
<span class="t" style="left:76.0px;top:5.7px;font-size:8.2px;font-weight:normal;color:#dcdcdc;letter-spacing:0.05px;">Image</span>
<span class="t" style="left:107.3px;top:5.7px;font-size:8.2px;font-weight:normal;color:#dcdcdc;letter-spacing:-0.28px;">Layer</span>
<span class="t" style="left:135.5px;top:5.7px;font-size:8.2px;font-weight:normal;color:#dcdcdc;letter-spacing:0.04px;">Type</span>
<span class="t" style="left:162.0px;top:5.7px;font-size:8.2px;font-weight:normal;color:#dcdcdc;letter-spacing:-0.06px;">Select</span>
<span class="t" style="left:193.0px;top:5.7px;font-size:8.2px;font-weight:normal;color:#dcdcdc;letter-spacing:0.03px;">Filter</span>
<span class="t" style="left:220.5px;top:5.7px;font-size:8.2px;font-weight:normal;color:#dcdcdc;letter-spacing:0.22px;">3D</span>
<span class="t" style="left:240.5px;top:5.7px;font-size:8.2px;font-weight:normal;color:#dcdcdc;letter-spacing:0.07px;">View</span>
<span class="t" style="left:266.6px;top:5.7px;font-size:8.2px;font-weight:normal;color:#dcdcdc;letter-spacing:0.21px;">Window</span>
<span class="t" style="left:305.0px;top:5.7px;font-size:8.2px;font-weight:normal;color:#dcdcdc;letter-spacing:0.14px;">Help</span>
<span class="t" style="left:83.6px;top:28.1px;font-size:7.1px;font-weight:normal;color:#e0e0e0;letter-spacing:-0.25px;-webkit-text-stroke:0.1px #e0e0e0;">Auto-Select:</span>
<span class="t" style="left:134.6px;top:27.8px;font-size:7.3px;font-weight:normal;color:#dcdcdc;letter-spacing:-0.29px;">Layer</span>
<span class="t" style="left:186.6px;top:28.1px;font-size:7.1px;font-weight:normal;color:#dcdcdc;letter-spacing:-0.18px;-webkit-text-stroke:0.1px #dcdcdc;">Show Transform Controls</span>
<span class="t" style="left:479.4px;top:27.9px;font-size:7.3px;font-weight:normal;color:#767676;letter-spacing:-0.24px;">3D Mode:</span>
<span class="t" style="left:34.0px;top:48.7px;font-size:7.6px;font-weight:normal;color:#c4c4c4;letter-spacing:-0.07px;-webkit-text-stroke:0.25px #c4c4c4;">DSC_3944.jpg</span>
<span class="t" style="left:109.6px;top:48.7px;font-size:7.6px;font-weight:normal;color:#c4c4c4;letter-spacing:-0.05px;-webkit-text-stroke:0.25px #c4c4c4;">DSC_3904.jpg</span>
<span class="t" style="left:184.6px;top:48.7px;font-size:7.6px;font-weight:normal;color:#c4c4c4;letter-spacing:0.11px;-webkit-text-stroke:0.25px #c4c4c4;">_DSC3795 filtered.psd</span>
<span class="t" style="left:284.3px;top:48.7px;font-size:7.6px;font-weight:normal;color:#c4c4c4;letter-spacing:0.23px;-webkit-text-stroke:0.25px #c4c4c4;">hexoshere website.png</span>
<span class="t" style="left:390.6px;top:48.7px;font-size:7.6px;font-weight:normal;color:#c4c4c4;letter-spacing:0.19px;-webkit-text-stroke:0.25px #c4c4c4;">Untitled-1 @ ...</span>
<span class="t" style="left:465.6px;top:48.7px;font-size:7.6px;font-weight:normal;color:#ececec;letter-spacing:0.13px;-webkit-text-stroke:0.25px #ececec;">c @ 16.7% (Bitmap) *</span>
<span class="t" style="left:563.6px;top:48.7px;font-size:7.6px;font-weight:normal;color:#c4c4c4;letter-spacing:0.02px;-webkit-text-stroke:0.25px #c4c4c4;">y @ 16.7% (B...</span>
<span class="t" style="left:639.3px;top:48.7px;font-size:7.6px;font-weight:normal;color:#c4c4c4;letter-spacing:0.02px;-webkit-text-stroke:0.25px #c4c4c4;">m @ 16.7% (...</span>
<span class="t" style="left:714.6px;top:48.7px;font-size:7.6px;font-weight:normal;color:#c4c4c4;letter-spacing:0.03px;-webkit-text-stroke:0.25px #c4c4c4;">k @ 16.7% (B...</span>
<span class="t" style="left:790.1px;top:48.7px;font-size:7.6px;font-weight:normal;color:#c4c4c4;letter-spacing:-0.49px;-webkit-text-stroke:0.25px #c4c4c4;">_DSC</span>
<span class="t" style="left:824.2px;top:49.1px;font-size:7.5px;font-weight:bold;color:#d0d0d0;letter-spacing:-0.38px;">&gt;&gt;</span>
<span class="t" style="left:30.6px;top:539.4px;font-size:7px;font-weight:normal;color:#e0e0e0;letter-spacing:0.01px;">16.67%</span>
<span class="t" style="left:90.1px;top:539.4px;font-size:7px;font-weight:normal;color:#d0d0d0;letter-spacing:-0.31px;">Doc: 2.08M/1.83M</span>
<span class="t" style="left:869.6px;top:56.5px;font-size:7.0px;font-weight:normal;color:#f6f6f6;letter-spacing:-0.03px;-webkit-text-stroke:0.35px #f6f6f6;">Histogram</span>
<span class="t" style="left:915.1px;top:56.1px;font-size:7.5px;font-weight:normal;color:#b2b2b2;letter-spacing:-0.26px;">Navigator</span>
<span class="t" style="left:869.6px;top:140.8px;font-size:7.5px;font-weight:normal;color:#b2b2b2;letter-spacing:-0.33px;">Libraries</span>
<span class="t" style="left:909.6px;top:141.2px;font-size:7.0px;font-weight:normal;color:#f6f6f6;letter-spacing:-0.04px;-webkit-text-stroke:0.35px #f6f6f6;">Adjustments</span>
<span class="t" style="left:869.6px;top:157.8px;font-size:7.2px;font-weight:normal;color:#d2d2d2;letter-spacing:-0.13px;">Add an adjustment</span>
<span class="t" style="left:869.6px;top:228.5px;font-size:7.5px;font-weight:normal;color:#b2b2b2;letter-spacing:-0.49px;">Layers</span>
<span class="t" style="left:902.1px;top:228.9px;font-size:7.0px;font-weight:normal;color:#f6f6f6;letter-spacing:-0.28px;-webkit-text-stroke:0.35px #f6f6f6;">Channels</span>
<span class="t" style="left:942.6px;top:228.5px;font-size:7.5px;font-weight:normal;color:#b2b2b2;letter-spacing:-0.48px;">Paths</span>
<span class="t" style="left:899.6px;top:252.0px;font-size:7.3px;font-weight:normal;color:#e4e4e4;letter-spacing:-0.27px;">Bitmap</span>
<span class="t" style="left:984.5px;top:252.0px;font-size:7.3px;font-weight:normal;color:#e4e4e4;letter-spacing:-0.16px;">Ctrl+3</span>
<span class="t" style="left:59.1px;top:557.8px;font-size:10.2px;font-weight:normal;color:#3a3a3a;letter-spacing:-0.14px;">Type here to search</span>
<span class="t" style="left:954.3px;top:552.8px;font-size:8px;font-weight:normal;color:#ffffff;letter-spacing:-0.13px;">06:06</span>
<span class="t" style="left:943.6px;top:565.3px;font-size:8px;font-weight:normal;color:#ffffff;letter-spacing:0.14px;">29/04/2020</span>
<span class="t" style="left:8.6px;top:5.8px;font-size:6px;font-weight:bold;color:#31c5f0;letter-spacing:-0.27px;">Ps</span>
<span class="t" style="left:470.0px;top:556.9px;font-size:10.2px;font-weight:bold;color:#2fc3ee;letter-spacing:-0.28px;">Ps</span>
<span class="t" style="left:861.5px;top:558.5px;font-size:11px;font-weight:bold;color:#ffffff;letter-spacing:-0.23px;">?</span>
<span class="t" style="left:8.2px;top:374.7px;font-size:14px;font-weight:normal;color:#dedede;letter-spacing:1.24px;font-family:'Liberation Serif',serif;">T</span>
</body>
</html>
